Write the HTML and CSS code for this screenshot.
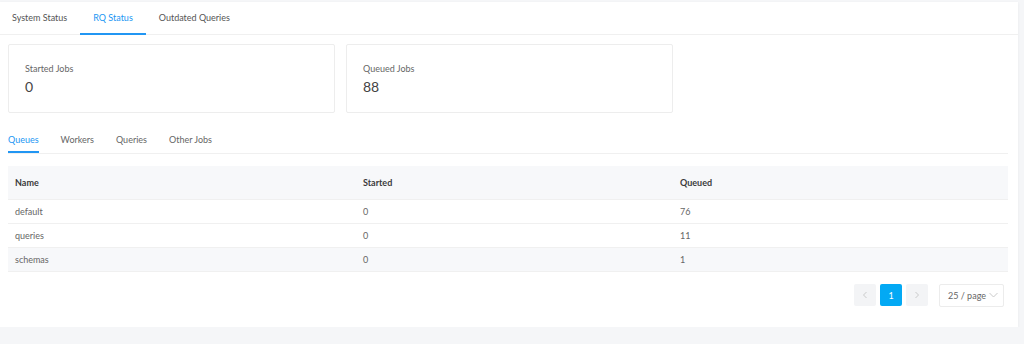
FILE: index.html
```html
<!DOCTYPE html>
<html>
<head>
<meta charset="utf-8">
<link rel="stylesheet" href="styles.css">
</head>
<body>
<div class="panel">
  <nav class="main-tabs">
    <span class="tab">System Status</span>
    <span class="tab active">RQ Status</span>
    <span class="tab">Outdated Queries</span>
  </nav>
  <div class="content">
    <div class="cards">
      <div class="card">
        <div class="card-label">Started Jobs</div>
        <div class="card-value">0</div>
      </div>
      <div class="card">
        <div class="card-label">Queued Jobs</div>
        <div class="card-value">88</div>
      </div>
    </div>
    <nav class="sub-tabs">
      <span class="sub-tab active">Queues</span>
      <span class="sub-tab">Workers</span>
      <span class="sub-tab">Queries</span>
      <span class="sub-tab">Other Jobs</span>
    </nav>
    <table class="table">
      <thead>
        <tr><th class="c1">Name</th><th class="c2">Started</th><th>Queued</th></tr>
      </thead>
      <tbody>
        <tr><td>default</td><td>0</td><td>76</td></tr>
        <tr><td>queries</td><td>0</td><td>11</td></tr>
        <tr class="hover"><td>schemas</td><td>0</td><td>1</td></tr>
      </tbody>
    </table>
    <div class="pagination">
      <span class="pg-btn disabled">
        <svg width="8" height="8" viewBox="0 0 8 8"><path d="M5.5 1 L2.5 4 L5.5 7" fill="none" stroke="#c4c4c4" stroke-width="0.9"/></svg>
      </span>
      <span class="pg-btn current">1</span>
      <span class="pg-btn disabled">
        <svg width="8" height="8" viewBox="0 0 8 8"><path d="M2.5 1 L5.5 4 L2.5 7" fill="none" stroke="#c4c4c4" stroke-width="0.9"/></svg>
      </span>
      <span class="size-select">25 / page
        <svg width="9" height="6" viewBox="0 0 9 6"><path d="M0.5 1 L4.5 5 L8.5 1" fill="none" stroke="#c4c4c4" stroke-width="0.9"/></svg>
      </span>
    </div>
  </div>
</div>
</body>
</html>
```
FILE: styles.css
```css
html, body {
  margin: 0;
  padding: 0;
}
body {
  background: #f5f6f8;
  padding-top: 2px;
  font-family: Lato, "Noto Sans", sans-serif;
  font-size: 9px;
  color: #666;
}
.panel {
  width: 1018px;
  background: #fff;
  box-shadow: 0 1px 3px rgba(0, 0, 0, 0.06);
}
.main-tabs {
  display: flex;
  height: 32px;
  border-bottom: 1px solid #f0f0f0;
  margin-left: -1px;
}
.tab {
  display: flex;
  align-items: center;
  padding: 0 13px;
  color: #555;
  box-sizing: border-box;
  border-bottom: 2px solid transparent;
  margin-bottom: -1px;
}
.tab.active {
  color: #2196f3;
  border-bottom-color: #2196f3;
}
.content {
  padding: 9px 10px 20px 8px;
}
.cards {
  display: flex;
  gap: 11px;
}
.card {
  width: 327px;
  height: 69px;
  box-sizing: border-box;
  border: 1px solid #ededed;
  border-radius: 2px;
  padding: 17px 16px 0 16px;
}
.card-label {
  color: #666;
  line-height: 13px;
}
.card-value {
  color: #444;
  font-size: 14px;
  line-height: 20px;
  margin-top: 2px;
}
.sub-tabs {
  display: flex;
  gap: 22px;
  margin-top: 14px;
  height: 26px;
  border-bottom: 1px solid #f0f0f0;
}
.sub-tab {
  display: flex;
  align-items: center;
  color: #666;
  box-sizing: border-box;
  border-bottom: 2px solid transparent;
}
.sub-tab.active {
  color: #2196f3;
  border-bottom-color: #2196f3;
}
.table {
  margin-top: 12px;
  width: 1000px;
  border-collapse: collapse;
  table-layout: fixed;
}
.table th {
  background: #f7f8fa;
  height: 33px;
  text-align: left;
  font-weight: 700;
  color: #3a3a3a;
  padding: 0 7px;
  border-bottom: 1px solid #f0f0f0;
  box-sizing: border-box;
}
.table th.c1 { width: 348px; }
.table th.c2 { width: 317px; }
.table td {
  height: 24px;
  padding: 0 7px;
  border-bottom: 1px solid #f0f0f0;
  box-sizing: border-box;
  color: #666;
}
.table tr.hover td {
  background: #f7f8fa;
}
.pagination {
  display: flex;
  justify-content: flex-end;
  align-items: center;
  margin-top: 12px;
  margin-right: 4px;
  gap: 4px;
  height: 23px;
}
.pg-btn {
  width: 22px;
  height: 22px;
  display: flex;
  align-items: center;
  justify-content: center;
  border-radius: 2px;
  box-sizing: border-box;
}
.pg-btn.disabled {
  background: #f3f4f6;
}
.pg-btn.current {
  background: #03a9f4;
  color: #fff;
}
.size-select {
  margin-left: 7px;
  width: 65px;
  height: 23px;
  box-sizing: border-box;
  border: 1px solid #ececec;
  border-radius: 2px;
  display: flex;
  align-items: center;
  justify-content: space-between;
  padding: 0 5px 0 8px;
  color: #666;
}
```
